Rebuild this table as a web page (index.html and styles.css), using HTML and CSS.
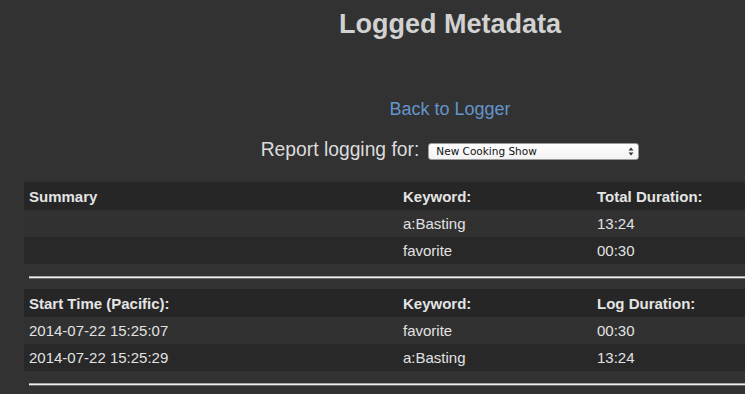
FILE: index.html
```html
<!DOCTYPE html>
<html lang="en">
<head>
<meta charset="utf-8">
<title>Logged Metadata</title>
<link rel="stylesheet" href="styles.css">
</head>
<body>
<div class="page">
  <h1 class="title">Logged Metadata</h1>
  <div class="back"><a class="back-link" href="#">Back to Logger</a></div>
  <div class="report">
    <span class="report-label">Report logging for:</span>
    <span class="select-wrap">
      <select class="show-select">
        <option>New Cooking Show</option>
      </select>
      <svg class="select-arrows" width="6" height="9" viewBox="0 0 6 9" aria-hidden="true">
        <path d="M3 0.5 L5.5 3.5 H0.5 Z" fill="#333"/>
        <path d="M3 8.5 L5.5 5.5 H0.5 Z" fill="#333"/>
      </svg>
    </span>
  </div>

  <table class="log-table first">
    <colgroup><col class="c1"><col class="c2"><col class="c3"></colgroup>
    <tr class="head"><th>Summary</th><th>Keyword:</th><th>Total Duration:</th></tr>
    <tr class="odd"><td></td><td>a:Basting</td><td>13:24</td></tr>
    <tr class="even"><td></td><td>favorite</td><td>00:30</td></tr>
  </table>
  <div class="rule"></div>

  <table class="log-table">
    <colgroup><col class="c1"><col class="c2"><col class="c3"></colgroup>
    <tr class="head"><th>Start Time (Pacific):</th><th>Keyword:</th><th>Log Duration:</th></tr>
    <tr class="odd"><td>2014-07-22 15:25:07</td><td>favorite</td><td>00:30</td></tr>
    <tr class="even"><td>2014-07-22 15:25:29</td><td>a:Basting</td><td>13:24</td></tr>
  </table>
  <div class="rule"></div>
</div>
</body>
</html>
```

FILE: styles.css
```css
html, body {
  margin: 0;
  padding: 0;
  background: #323232;
  overflow: hidden;
}

body {
  font-family: "Liberation Sans", Arial, Helvetica, sans-serif;
  color: #e2e2e2;
}

.page {
  width: 852px;
  margin-left: 24px;
}

.title {
  margin: 8px 0 0;
  font-size: 27px;
  line-height: 32px;
  font-weight: bold;
  color: #d2d2d2;
  text-align: center;
}

.back {
  margin-top: 58px;
  text-align: center;
  font-size: 18px;
  line-height: 22px;
}

.back-link {
  color: #6395cc;
  text-decoration: none;
}

.report {
  margin-top: 18px;
  display: flex;
  justify-content: center;
  align-items: center;
  height: 24px;
}

.report-label {
  font-size: 19.3px;
  line-height: 24px;
  color: #dcdcdc;
  margin-right: 9px;
}

.select-wrap {
  position: relative;
  display: inline-block;
  margin-top: 3px;
}

.show-select {
  -webkit-appearance: none;
  appearance: none;
  display: block;
  width: 211px;
  height: 17px;
  margin: 0;
  padding: 0 0 0 7px;
  border: 1px solid #9a9a9a;
  border-radius: 3px;
  background: linear-gradient(#ffffff, #f2f2f2);
  font-family: "DejaVu Sans", "Liberation Sans", sans-serif;
  font-size: 10.5px;
  line-height: 15px;
  color: #111;
  box-sizing: border-box;
}

.select-arrows {
  position: absolute;
  right: 5px;
  top: 4px;
}

.log-table {
  width: 852px;
  border-collapse: collapse;
  table-layout: fixed;
  font-size: 15px;
}

.log-table.first {
  margin-top: 20px;
}

.c1 { width: 374px; }
.c2 { width: 194px; }
.c3 { width: 284px; }

.log-table th,
.log-table td {
  padding: 0 5px;
  text-align: left;
  vertical-align: middle;
  white-space: nowrap;
}

.log-table th {
  font-weight: bold;
  color: #e4e4e4;
}

.head { height: 28px; background: #262626; }
.odd { height: 27px; background: #313131; }
.even { height: 27px; background: #282828; }

.rule {
  margin: 12px 5px 10px;
  height: 1px;
  background: #f0f0f0;
  border-top: 1px solid #a8a8a8;
  border-bottom: 1px solid #6a6a6a;
}
```
